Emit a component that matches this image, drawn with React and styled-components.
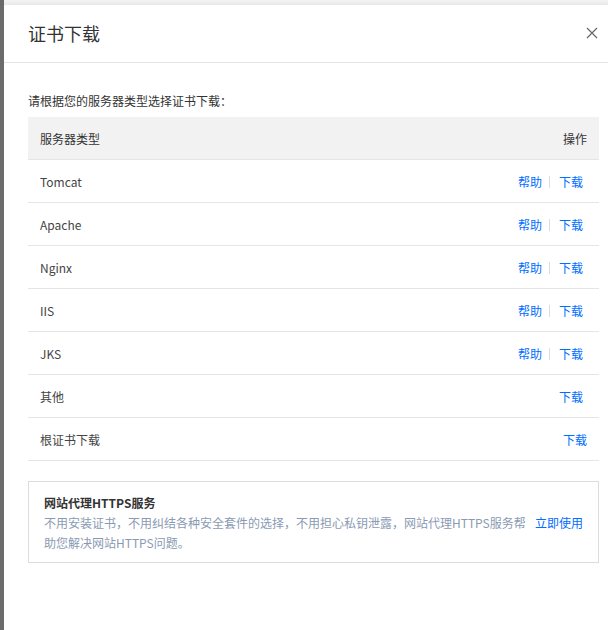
import styled, { createGlobalStyle } from "styled-components";

const GlobalStyle = createGlobalStyle`
  html, body {
    margin: 0;
    padding: 0;
    background: #fff;
  }
  body {
    font-family: "Noto Sans CJK SC", "Liberation Sans", sans-serif;
    font-size: 12px;
    color: #333;
  }
`;

const Page = styled.div`
  display: flex;
  height: 630px;
  width: 608px;
  background: #6b6b6b;
  padding-top: 5px;
  box-sizing: border-box;
  position: relative;
  &::before {
    content: "";
    position: absolute;
    left: 4px;
    right: 0;
    top: 0;
    height: 5px;
    background: linear-gradient(#f4f4f4, #e8e8e8);
  }
`;

const Dialog = styled.div`
  flex: 1;
  margin-left: 4px;
  background: #fff;
  display: flex;
  flex-direction: column;
`;

const Header = styled.div`
  height: 57px;
  display: flex;
  align-items: center;
  justify-content: space-between;
  padding: 0 10px 0 24px;
  border-bottom: 1px solid #e3e3e3;
`;

const Title = styled.h3`
  margin: 0;
  font-size: 18px;
  font-weight: 400;
  color: #333;
  margin-top: -2px;
`;

const Close = styled.button`
  border: 0;
  background: none;
  padding: 0;
  width: 12px;
  height: 12px;
  cursor: pointer;
  margin-top: -2px;
  svg {
    display: block;
  }
`;

const Body = styled.div`
  padding: 28px 9px 0 24px;
`;

const Intro = styled.p`
  margin: 0 0 6px;
  line-height: 20px;
  color: #333;
`;

const Table = styled.table`
  width: 100%;
  border-collapse: collapse;
  table-layout: fixed;
`;

const Th = styled.th`
  height: 42px;
  padding: 0 12px;
  background: #f2f2f2;
  font-weight: 400;
  color: #333;
  text-align: ${(p) => (p.$right ? "right" : "left")};
  border-bottom: 1px solid #e5e5e5;
`;

const Td = styled.td`
  height: 42px;
  padding: 0 ${(p) => p.$pr || "12px"} 0 12px;
  color: #444;
  text-align: ${(p) => (p.$right ? "right" : "left")};
  border-bottom: 1px solid #e5e5e5;
`;

const Link = styled.a`
  color: #006eff;
  text-decoration: none;
  cursor: pointer;
`;

const Sep = styled.span`
  display: inline-block;
  width: 1px;
  height: 12px;
  background: #dcdcdc;
  margin: 0 9px 0 7px;
  vertical-align: -1px;
`;

const Promo = styled.div`
  margin-top: 20px;
  border: 1px solid #dcdcdc;
  padding: 11px 15px 9px;
  display: flex;
  align-items: flex-start;
`;

const PromoText = styled.div`
  flex: 1;
  min-width: 0;
  margin-right: 8px;
`;

const PromoTitle = styled.div`
  font-weight: 600;
  color: #333;
  line-height: 20px;
`;

const PromoDesc = styled.div`
  color: #8a9ab3;
  line-height: 20px;
`;

const PromoLink = styled(Link)`
  margin-top: 20px;
  line-height: 20px;
  white-space: nowrap;
`;

const rows = [
  { name: "Tomcat", help: true },
  { name: "Apache", help: true },
  { name: "Nginx", help: true },
  { name: "IIS", help: true },
  { name: "JKS", help: true },
  { name: "其他", help: false },
  { name: "根证书下载", help: false, pr: "12px" },
];

export default function App() {
  return (
    <>
      <GlobalStyle />
      <Page>
        <Dialog>
          <Header>
            <Title>证书下载</Title>
            <Close aria-label="关闭">
              <svg width="12" height="12" viewBox="0 0 12 12">
                <path d="M1 1L11 11M11 1L1 11" stroke="#666" strokeWidth="1.2" fill="none" />
              </svg>
            </Close>
          </Header>
          <Body>
            <Intro>请根据您的服务器类型选择证书下载：</Intro>
            <Table>
              <thead>
                <tr>
                  <Th>服务器类型</Th>
                  <Th $right>操作</Th>
                </tr>
              </thead>
              <tbody>
                {rows.map((r) => (
                  <tr key={r.name}>
                    <Td>{r.name}</Td>
                    <Td $right $pr={r.pr || "16px"}>
                      {r.help && (
                        <>
                          <Link>帮助</Link>
                          <Sep />
                        </>
                      )}
                      <Link>下载</Link>
                    </Td>
                  </tr>
                ))}
              </tbody>
            </Table>
            <Promo>
              <PromoText>
                <PromoTitle>网站代理HTTPS服务</PromoTitle>
                <PromoDesc>
                  不用安装证书，不用纠结各种安全套件的选择，不用担心私钥泄露，网站代理HTTPS服务帮助您解决网站HTTPS问题。
                </PromoDesc>
              </PromoText>
              <PromoLink>立即使用</PromoLink>
            </Promo>
          </Body>
        </Dialog>
      </Page>
    </>
  );
}
